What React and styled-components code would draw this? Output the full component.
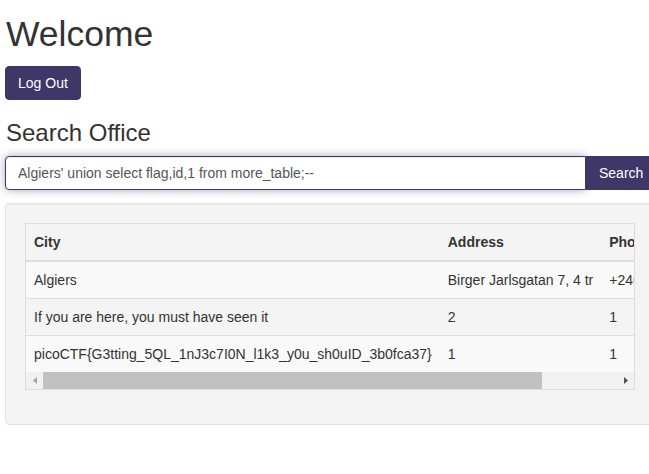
import styled, { createGlobalStyle } from "styled-components";

const purple = "#3e3768";

const GlobalStyle = createGlobalStyle`
  html, body {
    margin: 0;
    padding: 0;
    overflow: hidden;
    background: #fff;
  }
  body {
    font-family: "Liberation Sans", Arial, sans-serif;
    font-size: 14px;
    line-height: 1.42857;
    color: #333;
  }
  * { box-sizing: border-box; }
`;

const offices = [
  { city: "Algiers", address: "Birger Jarlsgatan 7, 4 tr", phone: "+246 8 208 3340" },
  { city: "If you are here, you must have seen it", address: "2", phone: "1" },
  {
    city: "picoCTF{G3tting_5QL_1nJ3c7I0N_l1k3_y0u_sh0uID_3b0fca37}",
    address: "1",
    phone: "1",
  },
];

// visible share of the table in the scroll area
const thumbShare = 87;

function App() {
  return (
    <>
      <GlobalStyle />
      <Page>
        <Title>Welcome</Title>
        <Button>Log Out</Button>
        <Subtitle>Search Office</Subtitle>
        <SearchGroup>
          <SearchInput
            defaultValue="Algiers' union select flag,id,1 from more_table;--"
            spellCheck={false}
          />
          <SearchButton>Search</SearchButton>
        </SearchGroup>
        <Well>
          <TableWrap>
            <Scroller>
              <Table>
                <thead>
                  <tr>
                    <Th>City</Th>
                    <Th>Address</Th>
                    <Th>Phone</Th>
                  </tr>
                </thead>
                <tbody>
                  {offices.map((o, i) => (
                    <Row key={i}>
                      <Td>{o.city}</Td>
                      <Td>{o.address}</Td>
                      <Td>{o.phone}</Td>
                    </Row>
                  ))}
                </tbody>
              </Table>
            </Scroller>
            <ScrollBar>
              <Arrow>
                <svg width="4" height="7" viewBox="0 0 4 7">
                  <path d="M4 0 L0 3.5 L4 7 Z" fill="#a3a3a3" />
                </svg>
              </Arrow>
              <Track>
                <Thumb style={{ width: `${thumbShare}%` }} />
              </Track>
              <Arrow>
                <svg width="4" height="7" viewBox="0 0 4 7">
                  <path d="M0 0 L4 3.5 L0 7 Z" fill="#505050" />
                </svg>
              </Arrow>
            </ScrollBar>
          </TableWrap>
        </Well>
      </Page>
    </>
  );
}

const Page = styled.div`
  width: 660px;
  padding: 0 5px;
`;

const Title = styled.h1`
  font-size: 35.5px;
  font-weight: 400;
  line-height: 1.1;
  margin: 15px 0 12px 1px;
`;

const Button = styled.button`
  display: block;
  font-family: inherit;
  font-size: 14px;
  line-height: 20px;
  padding: 6px 12px;
  height: 34px;
  color: #fff;
  background: ${purple};
  border: 1px solid ${purple};
  border-radius: 4px;
`;

const Subtitle = styled.h3`
  font-size: 24px;
  font-weight: 400;
  line-height: 1.1;
  margin: 20px 0 10px 1px;
`;

const SearchGroup = styled.div`
  display: flex;
  width: 650px;
  height: 34px;
`;

const SearchInput = styled.input`
  flex: 1;
  min-width: 0;
  height: 34px;
  padding: 6px 12px;
  font-family: inherit;
  font-size: 14px;
  color: #555;
  background: #fff;
  border: 1px solid ${purple};
  border-radius: 4px 0 0 4px;
  box-shadow: inset 0 1px 1px rgba(0, 0, 0, 0.075), 0 0 8px rgba(62, 55, 104, 0.45);
  outline: none;
`;

const SearchButton = styled.button`
  width: 69px;
  height: 34px;
  padding: 6px 12px;
  font-family: inherit;
  font-size: 14px;
  color: #fff;
  text-align: left;
  background: ${purple};
  border: 1px solid ${purple};
  border-radius: 0;
`;

const Well = styled.div`
  width: 650px;
  margin-top: 13px;
  padding: 19px;
  background: #f4f4f4;
  border: 1px solid #e3e3e3;
  border-radius: 4px;
  box-shadow: inset 0 1px 1px rgba(0, 0, 0, 0.05);
`;

const TableWrap = styled.div`
  border: 1px solid #ddd;
  margin-bottom: 15px;
`;

const Scroller = styled.div`
  overflow: hidden;
`;

const ScrollBar = styled.div`
  display: flex;
  height: 17px;
  background: #f1f1f1;
`;

const Arrow = styled.div`
  width: 17px;
  flex: none;
  display: flex;
  align-items: center;
  justify-content: center;
`;

const Track = styled.div`
  flex: 1;
  display: flex;
  align-items: stretch;
`;

const Thumb = styled.div`
  background: #c1c1c1;
`;

const Table = styled.table`
  width: 100%;
  border-collapse: collapse;
  border-spacing: 0;
  background: transparent;
`;

const Th = styled.th`
  text-align: left;
  font-weight: 700;
  padding: 8px;
  line-height: 20px;
  white-space: nowrap;
  border-bottom: 2px solid #ddd;
`;

const Row = styled.tr`
  &:nth-child(odd) {
    background: #f9f9f9;
  }
`;

const Td = styled.td`
  padding: 8px;
  line-height: 20px;
  white-space: nowrap;
  border-top: 1px solid #ddd;
`;

export default App;
